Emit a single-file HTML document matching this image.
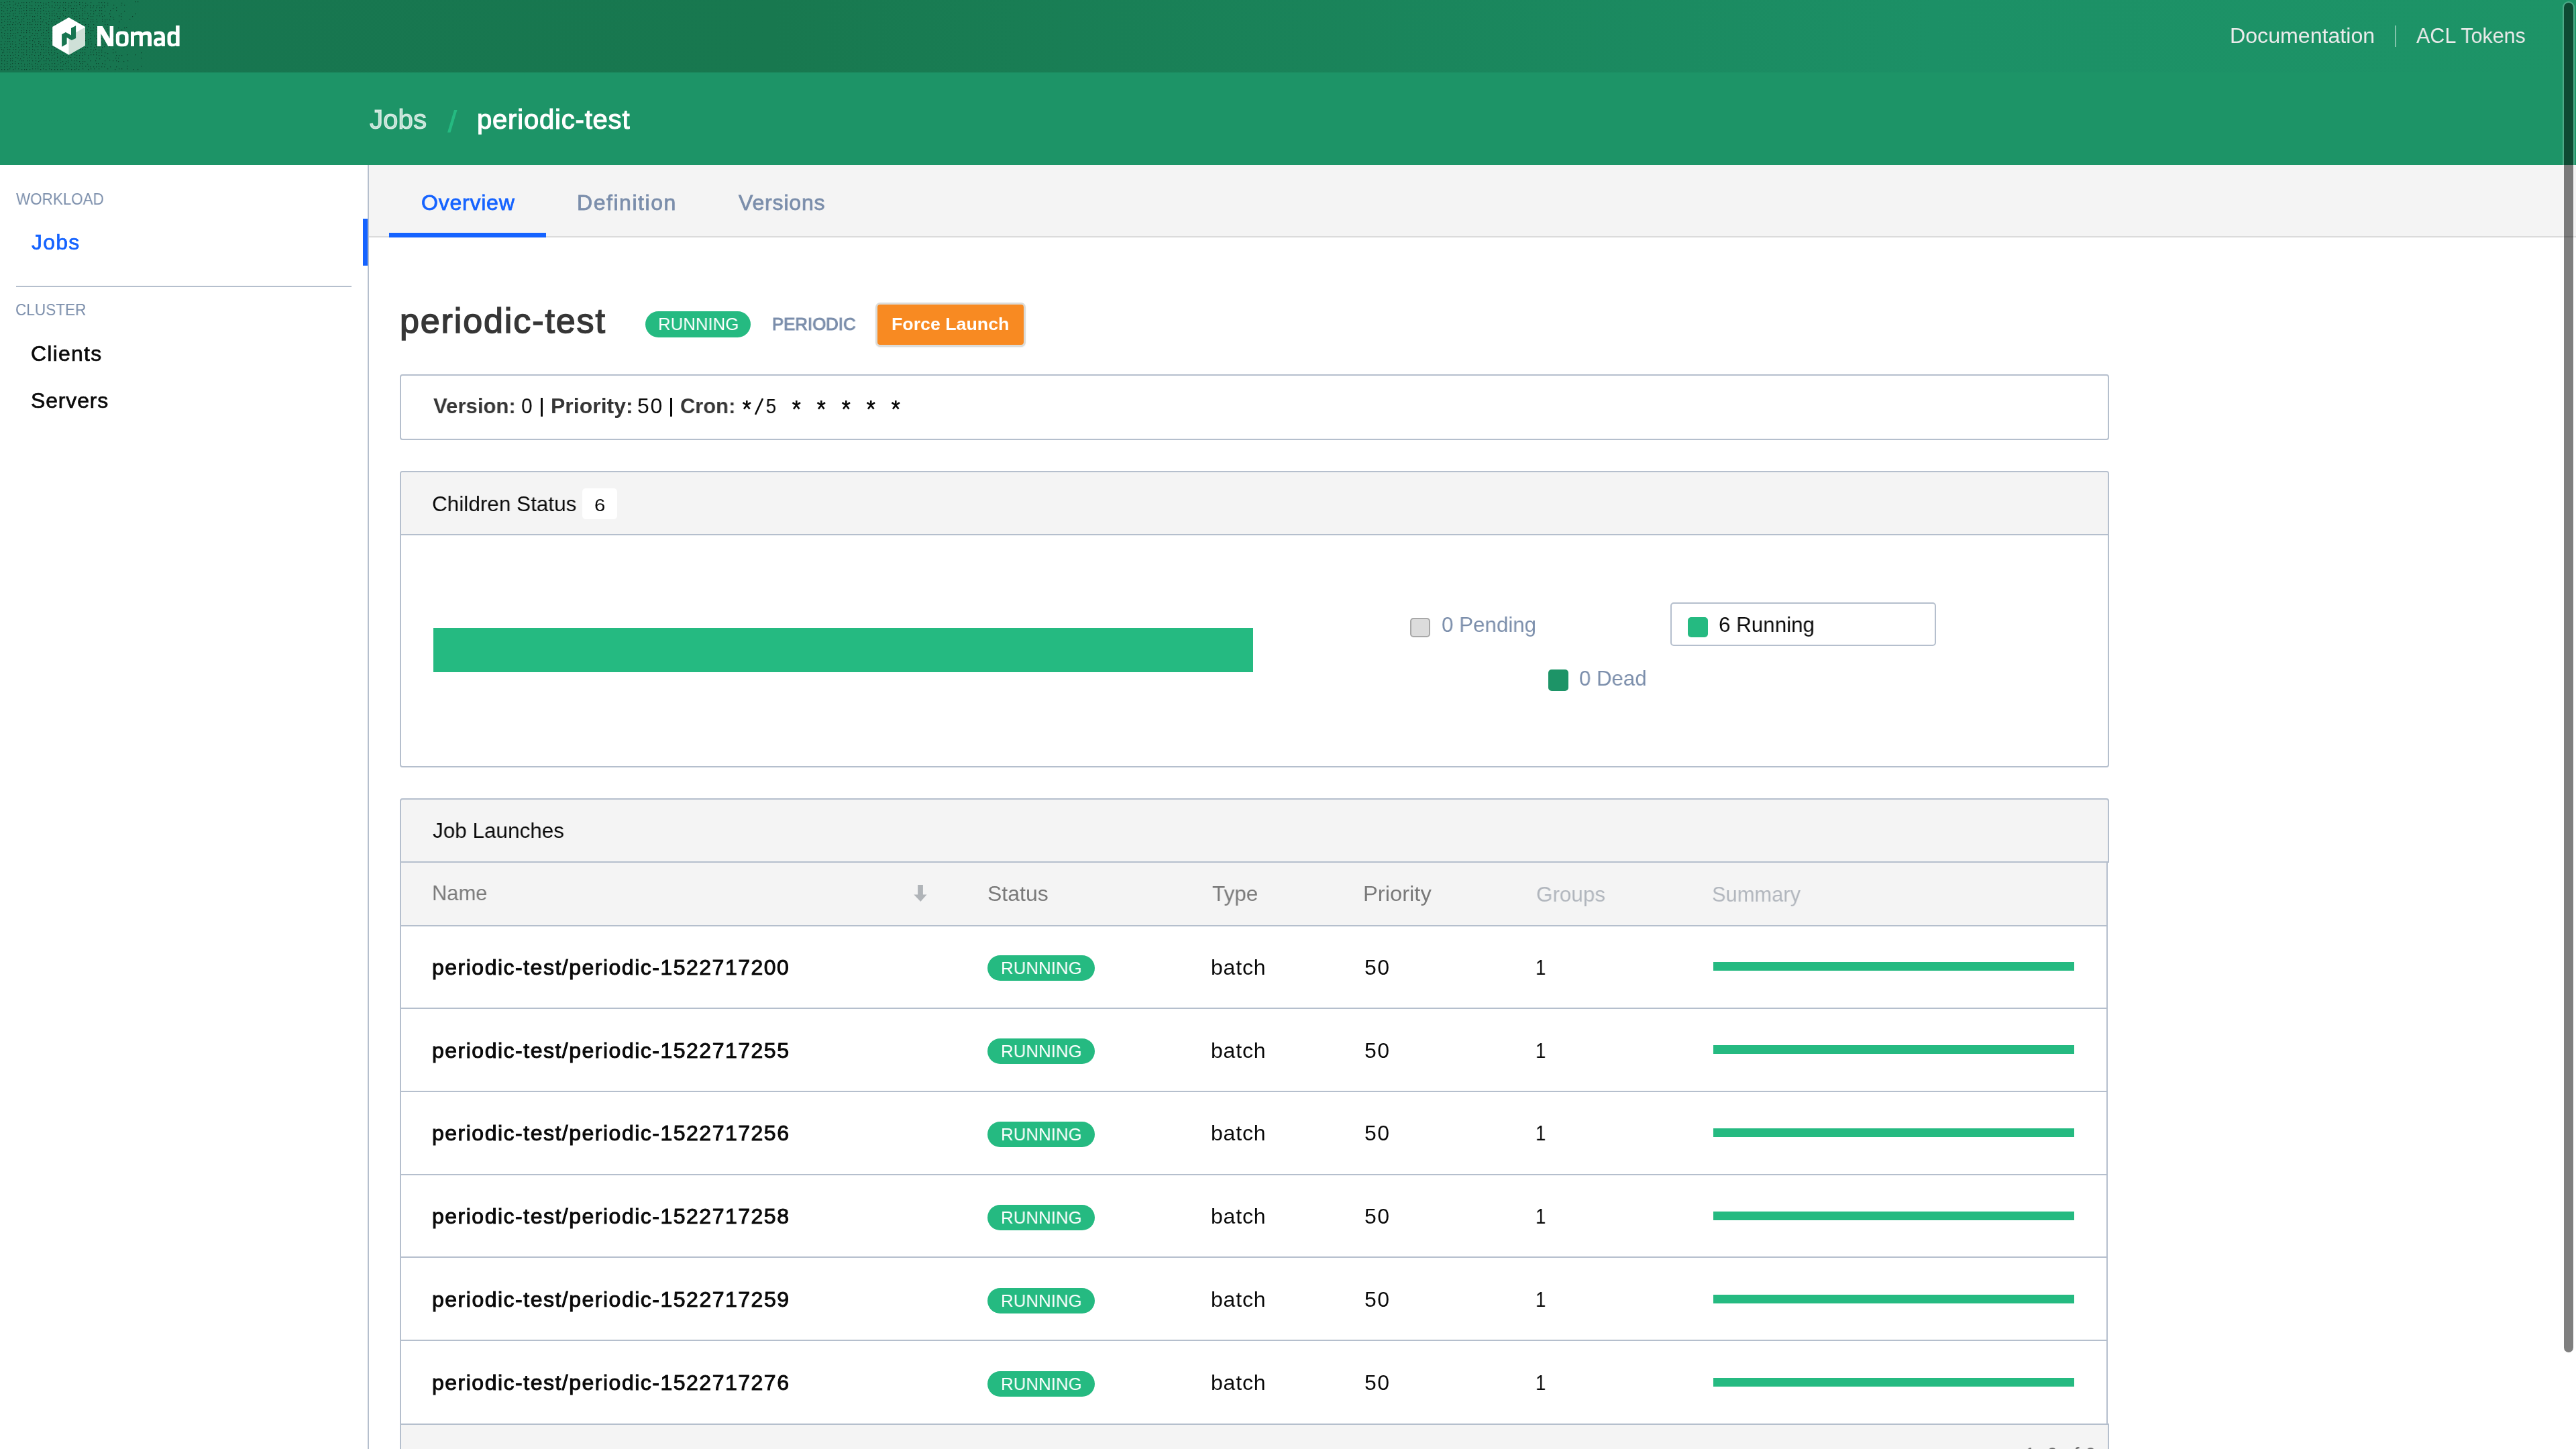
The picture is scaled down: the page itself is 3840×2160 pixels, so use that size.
<!DOCTYPE html>
<html><head><meta charset="utf-8"><title>periodic-test - Nomad</title>
<style>
html,body{margin:0;padding:0;}
body{width:3840px;height:2160px;overflow:hidden;position:relative;background:#fff;font-family:"Liberation Sans",sans-serif;}
body>div{position:absolute;}
@media (max-width:2400px){body{zoom:0.5;}}
.t{position:absolute;white-space:nowrap;line-height:1;transform-origin:0 0;will-change:transform;}
</style></head><body>
<div style="left:0px;top:0px;width:3840px;height:108px;background:linear-gradient(to right,#177550 0%,#18784f 30%,#1c9066 75%,#1d9467 100%);"></div>
<svg style="position:absolute;left:0;top:0" width="230" height="108"><path fill="#0c3b27" fill-opacity=".85" d="M1 3h1.2v1.2h-1.2zM6 3h1.2v1.2h-1.2zM10 2h1.2v1.2h-1.2zM14 2h1.2v1.2h-1.2zM19 2h1.2v1.2h-1.2zM23 4h1.2v1.2h-1.2zM27 4h1.2v1.2h-1.2zM32 3h1.2v1.2h-1.2zM35 3h1.2v1.2h-1.2zM39 3h1.2v1.2h-1.2zM43 3h1.2v1.2h-1.2zM47 2h1.2v1.2h-1.2zM52 3h1.2v1.2h-1.2zM56 3h1.2v1.2h-1.2zM60 3h1.2v1.2h-1.2zM64 4h1.2v1.2h-1.2zM68 4h1.2v1.2h-1.2zM72 3h1.2v1.2h-1.2zM77 2h1.2v1.2h-1.2zM81 3h1.2v1.2h-1.2zM85 3h1.2v1.2h-1.2zM89 3h1.2v1.2h-1.2zM94 3h1.2v1.2h-1.2zM97 3h1.2v1.2h-1.2zM102 4h1.2v1.2h-1.2zM106 3h1.2v1.2h-1.2zM110 2h1.2v1.2h-1.2zM113 3h1.2v1.2h-1.2zM118 3h1.2v1.2h-1.2zM122 3h1.2v1.2h-1.2zM127 4h1.2v1.2h-1.2zM135 3h1.2v1.2h-1.2zM147 3h1.2v1.2h-1.2zM151 3h1.2v1.2h-1.2zM155 3h1.2v1.2h-1.2zM160 4h1.2v1.2h-1.2zM181 4h1.2v1.2h-1.2zM201 2h1.2v1.2h-1.2zM205 2h1.2v1.2h-1.2zM1 6h1.2v1.2h-1.2zM5 8h1.2v1.2h-1.2zM10 7h1.2v1.2h-1.2zM14 6h1.2v1.2h-1.2zM19 7h1.2v1.2h-1.2zM22 6h1.2v1.2h-1.2zM26 8h1.2v1.2h-1.2zM30 8h1.2v1.2h-1.2zM35 7h1.2v1.2h-1.2zM39 8h1.2v1.2h-1.2zM44 7h1.2v1.2h-1.2zM47 8h1.2v1.2h-1.2zM52 7h1.2v1.2h-1.2zM57 8h1.2v1.2h-1.2zM61 8h1.2v1.2h-1.2zM64 7h1.2v1.2h-1.2zM68 6h1.2v1.2h-1.2zM72 7h1.2v1.2h-1.2zM77 8h1.2v1.2h-1.2zM82 7h1.2v1.2h-1.2zM85 7h1.2v1.2h-1.2zM89 8h1.2v1.2h-1.2zM93 7h1.2v1.2h-1.2zM97 7h1.2v1.2h-1.2zM102 8h1.2v1.2h-1.2zM105 8h1.2v1.2h-1.2zM110 8h1.2v1.2h-1.2zM114 8h1.2v1.2h-1.2zM118 6h1.2v1.2h-1.2zM123 8h1.2v1.2h-1.2zM127 8h1.2v1.2h-1.2zM130 7h1.2v1.2h-1.2zM134 8h1.2v1.2h-1.2zM139 8h1.2v1.2h-1.2zM144 8h1.2v1.2h-1.2zM147 7h1.2v1.2h-1.2zM152 7h1.2v1.2h-1.2zM155 8h1.2v1.2h-1.2zM160 7h1.2v1.2h-1.2zM169 7h1.2v1.2h-1.2zM180 7h1.2v1.2h-1.2zM185 7h1.2v1.2h-1.2zM2 11h1.2v1.2h-1.2zM7 11h1.2v1.2h-1.2zM11 12h1.2v1.2h-1.2zM15 11h1.2v1.2h-1.2zM19 11h1.2v1.2h-1.2zM23 12h1.2v1.2h-1.2zM28 12h1.2v1.2h-1.2zM31 12h1.2v1.2h-1.2zM35 11h1.2v1.2h-1.2zM39 11h1.2v1.2h-1.2zM44 12h1.2v1.2h-1.2zM47 12h1.2v1.2h-1.2zM51 12h1.2v1.2h-1.2zM55 12h1.2v1.2h-1.2zM60 12h1.2v1.2h-1.2zM64 11h1.2v1.2h-1.2zM68 11h1.2v1.2h-1.2zM73 10h1.2v1.2h-1.2zM77 10h1.2v1.2h-1.2zM81 11h1.2v1.2h-1.2zM86 12h1.2v1.2h-1.2zM88 11h1.2v1.2h-1.2zM94 11h1.2v1.2h-1.2zM97 12h1.2v1.2h-1.2zM101 11h1.2v1.2h-1.2zM106 12h1.2v1.2h-1.2zM109 12h1.2v1.2h-1.2zM113 12h1.2v1.2h-1.2zM119 11h1.2v1.2h-1.2zM122 12h1.2v1.2h-1.2zM126 11h1.2v1.2h-1.2zM134 11h1.2v1.2h-1.2zM138 11h1.2v1.2h-1.2zM143 11h1.2v1.2h-1.2zM148 11h1.2v1.2h-1.2zM151 11h1.2v1.2h-1.2zM155 10h1.2v1.2h-1.2zM168 12h1.2v1.2h-1.2zM173 11h1.2v1.2h-1.2zM2 15h1.2v1.2h-1.2zM5 16h1.2v1.2h-1.2zM10 15h1.2v1.2h-1.2zM15 16h1.2v1.2h-1.2zM18 15h1.2v1.2h-1.2zM22 15h1.2v1.2h-1.2zM28 16h1.2v1.2h-1.2zM31 16h1.2v1.2h-1.2zM35 15h1.2v1.2h-1.2zM39 15h1.2v1.2h-1.2zM44 15h1.2v1.2h-1.2zM47 15h1.2v1.2h-1.2zM51 15h1.2v1.2h-1.2zM56 16h1.2v1.2h-1.2zM60 16h1.2v1.2h-1.2zM64 15h1.2v1.2h-1.2zM68 16h1.2v1.2h-1.2zM72 16h1.2v1.2h-1.2zM77 16h1.2v1.2h-1.2zM80 15h1.2v1.2h-1.2zM86 16h1.2v1.2h-1.2zM89 16h1.2v1.2h-1.2zM94 15h1.2v1.2h-1.2zM97 15h1.2v1.2h-1.2zM102 16h1.2v1.2h-1.2zM106 16h1.2v1.2h-1.2zM109 16h1.2v1.2h-1.2zM114 16h1.2v1.2h-1.2zM117 16h1.2v1.2h-1.2zM122 15h1.2v1.2h-1.2zM126 16h1.2v1.2h-1.2zM135 15h1.2v1.2h-1.2zM139 16h1.2v1.2h-1.2zM142 15h1.2v1.2h-1.2zM148 15h1.2v1.2h-1.2zM151 15h1.2v1.2h-1.2zM156 16h1.2v1.2h-1.2zM164 15h1.2v1.2h-1.2zM173 15h1.2v1.2h-1.2zM185 16h1.2v1.2h-1.2zM2 20h1.2v1.2h-1.2zM7 20h1.2v1.2h-1.2zM11 19h1.2v1.2h-1.2zM14 19h1.2v1.2h-1.2zM19 20h1.2v1.2h-1.2zM22 19h1.2v1.2h-1.2zM28 19h1.2v1.2h-1.2zM32 19h1.2v1.2h-1.2zM36 20h1.2v1.2h-1.2zM39 19h1.2v1.2h-1.2zM44 19h1.2v1.2h-1.2zM47 19h1.2v1.2h-1.2zM52 19h1.2v1.2h-1.2zM55 19h1.2v1.2h-1.2zM60 19h1.2v1.2h-1.2zM65 20h1.2v1.2h-1.2zM69 20h1.2v1.2h-1.2zM73 19h1.2v1.2h-1.2zM77 20h1.2v1.2h-1.2zM80 19h1.2v1.2h-1.2zM84 20h1.2v1.2h-1.2zM89 20h1.2v1.2h-1.2zM93 20h1.2v1.2h-1.2zM98 19h1.2v1.2h-1.2zM101 19h1.2v1.2h-1.2zM106 19h1.2v1.2h-1.2zM111 20h1.2v1.2h-1.2zM113 19h1.2v1.2h-1.2zM117 19h1.2v1.2h-1.2zM122 20h1.2v1.2h-1.2zM126 19h1.2v1.2h-1.2zM130 19h1.2v1.2h-1.2zM134 20h1.2v1.2h-1.2zM139 20h1.2v1.2h-1.2zM147 19h1.2v1.2h-1.2zM151 20h1.2v1.2h-1.2zM163 20h1.2v1.2h-1.2zM180 20h1.2v1.2h-1.2zM201 20h1.2v1.2h-1.2zM2 24h1.2v1.2h-1.2zM5 24h1.2v1.2h-1.2zM11 24h1.2v1.2h-1.2zM14 23h1.2v1.2h-1.2zM19 23h1.2v1.2h-1.2zM23 24h1.2v1.2h-1.2zM26 24h1.2v1.2h-1.2zM31 24h1.2v1.2h-1.2zM35 24h1.2v1.2h-1.2zM39 23h1.2v1.2h-1.2zM44 23h1.2v1.2h-1.2zM48 24h1.2v1.2h-1.2zM51 24h1.2v1.2h-1.2zM55 23h1.2v1.2h-1.2zM60 24h1.2v1.2h-1.2zM65 24h1.2v1.2h-1.2zM68 25h1.2v1.2h-1.2zM73 23h1.2v1.2h-1.2zM77 23h1.2v1.2h-1.2zM81 23h1.2v1.2h-1.2zM85 24h1.2v1.2h-1.2zM89 24h1.2v1.2h-1.2zM94 23h1.2v1.2h-1.2zM97 24h1.2v1.2h-1.2zM102 24h1.2v1.2h-1.2zM107 23h1.2v1.2h-1.2zM111 24h1.2v1.2h-1.2zM114 24h1.2v1.2h-1.2zM118 23h1.2v1.2h-1.2zM122 23h1.2v1.2h-1.2zM131 23h1.2v1.2h-1.2zM135 24h1.2v1.2h-1.2zM138 24h1.2v1.2h-1.2zM144 23h1.2v1.2h-1.2zM148 23h1.2v1.2h-1.2zM152 24h1.2v1.2h-1.2zM155 23h1.2v1.2h-1.2zM164 24h1.2v1.2h-1.2zM168 25h1.2v1.2h-1.2zM177 23h1.2v1.2h-1.2zM180 24h1.2v1.2h-1.2zM197 24h1.2v1.2h-1.2zM2 29h1.2v1.2h-1.2zM7 28h1.2v1.2h-1.2zM11 28h1.2v1.2h-1.2zM14 28h1.2v1.2h-1.2zM18 27h1.2v1.2h-1.2zM22 27h1.2v1.2h-1.2zM27 28h1.2v1.2h-1.2zM32 29h1.2v1.2h-1.2zM34 27h1.2v1.2h-1.2zM40 28h1.2v1.2h-1.2zM43 28h1.2v1.2h-1.2zM48 29h1.2v1.2h-1.2zM51 29h1.2v1.2h-1.2zM56 28h1.2v1.2h-1.2zM60 27h1.2v1.2h-1.2zM64 29h1.2v1.2h-1.2zM68 28h1.2v1.2h-1.2zM73 27h1.2v1.2h-1.2zM77 29h1.2v1.2h-1.2zM81 28h1.2v1.2h-1.2zM86 27h1.2v1.2h-1.2zM88 27h1.2v1.2h-1.2zM93 29h1.2v1.2h-1.2zM98 28h1.2v1.2h-1.2zM102 29h1.2v1.2h-1.2zM106 28h1.2v1.2h-1.2zM110 27h1.2v1.2h-1.2zM114 28h1.2v1.2h-1.2zM118 27h1.2v1.2h-1.2zM123 27h1.2v1.2h-1.2zM126 28h1.2v1.2h-1.2zM130 27h1.2v1.2h-1.2zM135 28h1.2v1.2h-1.2zM138 28h1.2v1.2h-1.2zM143 28h1.2v1.2h-1.2zM152 28h1.2v1.2h-1.2zM156 29h1.2v1.2h-1.2zM159 28h1.2v1.2h-1.2zM163 29h1.2v1.2h-1.2zM169 28h1.2v1.2h-1.2zM180 28h1.2v1.2h-1.2zM193 28h1.2v1.2h-1.2zM2 33h1.2v1.2h-1.2zM6 31h1.2v1.2h-1.2zM11 32h1.2v1.2h-1.2zM15 32h1.2v1.2h-1.2zM19 33h1.2v1.2h-1.2zM23 32h1.2v1.2h-1.2zM28 33h1.2v1.2h-1.2zM31 32h1.2v1.2h-1.2zM35 31h1.2v1.2h-1.2zM40 33h1.2v1.2h-1.2zM44 33h1.2v1.2h-1.2zM48 31h1.2v1.2h-1.2zM52 32h1.2v1.2h-1.2zM56 32h1.2v1.2h-1.2zM60 32h1.2v1.2h-1.2zM63 32h1.2v1.2h-1.2zM68 33h1.2v1.2h-1.2zM72 31h1.2v1.2h-1.2zM76 31h1.2v1.2h-1.2zM80 32h1.2v1.2h-1.2zM84 32h1.2v1.2h-1.2zM90 33h1.2v1.2h-1.2zM92 32h1.2v1.2h-1.2zM98 31h1.2v1.2h-1.2zM102 32h1.2v1.2h-1.2zM105 33h1.2v1.2h-1.2zM111 33h1.2v1.2h-1.2zM115 33h1.2v1.2h-1.2zM118 33h1.2v1.2h-1.2zM123 32h1.2v1.2h-1.2zM126 32h1.2v1.2h-1.2zM134 32h1.2v1.2h-1.2zM138 31h1.2v1.2h-1.2zM144 32h1.2v1.2h-1.2zM152 31h1.2v1.2h-1.2zM156 32h1.2v1.2h-1.2zM177 32h1.2v1.2h-1.2zM1 37h1.2v1.2h-1.2zM6 37h1.2v1.2h-1.2zM11 36h1.2v1.2h-1.2zM14 36h1.2v1.2h-1.2zM18 36h1.2v1.2h-1.2zM22 36h1.2v1.2h-1.2zM26 35h1.2v1.2h-1.2zM30 36h1.2v1.2h-1.2zM35 36h1.2v1.2h-1.2zM40 36h1.2v1.2h-1.2zM44 36h1.2v1.2h-1.2zM47 36h1.2v1.2h-1.2zM52 36h1.2v1.2h-1.2zM55 36h1.2v1.2h-1.2zM60 36h1.2v1.2h-1.2zM65 37h1.2v1.2h-1.2zM69 35h1.2v1.2h-1.2zM72 36h1.2v1.2h-1.2zM77 35h1.2v1.2h-1.2zM82 36h1.2v1.2h-1.2zM85 36h1.2v1.2h-1.2zM90 36h1.2v1.2h-1.2zM93 35h1.2v1.2h-1.2zM98 37h1.2v1.2h-1.2zM102 37h1.2v1.2h-1.2zM106 36h1.2v1.2h-1.2zM109 36h1.2v1.2h-1.2zM114 37h1.2v1.2h-1.2zM119 37h1.2v1.2h-1.2zM122 36h1.2v1.2h-1.2zM127 36h1.2v1.2h-1.2zM131 36h1.2v1.2h-1.2zM139 36h1.2v1.2h-1.2zM156 36h1.2v1.2h-1.2zM160 36h1.2v1.2h-1.2zM3 40h1.2v1.2h-1.2zM5 41h1.2v1.2h-1.2zM10 40h1.2v1.2h-1.2zM15 41h1.2v1.2h-1.2zM19 40h1.2v1.2h-1.2zM23 41h1.2v1.2h-1.2zM28 40h1.2v1.2h-1.2zM32 41h1.2v1.2h-1.2zM35 40h1.2v1.2h-1.2zM40 41h1.2v1.2h-1.2zM44 41h1.2v1.2h-1.2zM47 40h1.2v1.2h-1.2zM51 40h1.2v1.2h-1.2zM55 40h1.2v1.2h-1.2zM60 40h1.2v1.2h-1.2zM65 40h1.2v1.2h-1.2zM69 40h1.2v1.2h-1.2zM72 41h1.2v1.2h-1.2zM77 40h1.2v1.2h-1.2zM82 40h1.2v1.2h-1.2zM84 39h1.2v1.2h-1.2zM90 41h1.2v1.2h-1.2zM93 40h1.2v1.2h-1.2zM97 40h1.2v1.2h-1.2zM102 40h1.2v1.2h-1.2zM105 40h1.2v1.2h-1.2zM110 40h1.2v1.2h-1.2zM113 41h1.2v1.2h-1.2zM119 41h1.2v1.2h-1.2zM122 40h1.2v1.2h-1.2zM131 39h1.2v1.2h-1.2zM134 41h1.2v1.2h-1.2zM139 41h1.2v1.2h-1.2zM143 40h1.2v1.2h-1.2zM159 40h1.2v1.2h-1.2zM176 41h1.2v1.2h-1.2zM185 41h1.2v1.2h-1.2zM188 40h1.2v1.2h-1.2zM1 44h1.2v1.2h-1.2zM7 45h1.2v1.2h-1.2zM11 44h1.2v1.2h-1.2zM15 45h1.2v1.2h-1.2zM18 44h1.2v1.2h-1.2zM22 44h1.2v1.2h-1.2zM26 44h1.2v1.2h-1.2zM31 45h1.2v1.2h-1.2zM35 44h1.2v1.2h-1.2zM39 45h1.2v1.2h-1.2zM43 45h1.2v1.2h-1.2zM48 44h1.2v1.2h-1.2zM52 45h1.2v1.2h-1.2zM57 45h1.2v1.2h-1.2zM60 44h1.2v1.2h-1.2zM64 44h1.2v1.2h-1.2zM69 45h1.2v1.2h-1.2zM72 44h1.2v1.2h-1.2zM77 45h1.2v1.2h-1.2zM80 45h1.2v1.2h-1.2zM85 44h1.2v1.2h-1.2zM88 45h1.2v1.2h-1.2zM94 45h1.2v1.2h-1.2zM97 45h1.2v1.2h-1.2zM102 45h1.2v1.2h-1.2zM106 45h1.2v1.2h-1.2zM111 44h1.2v1.2h-1.2zM114 45h1.2v1.2h-1.2zM119 44h1.2v1.2h-1.2zM122 44h1.2v1.2h-1.2zM126 44h1.2v1.2h-1.2zM130 44h1.2v1.2h-1.2zM135 45h1.2v1.2h-1.2zM138 45h1.2v1.2h-1.2zM143 44h1.2v1.2h-1.2zM160 44h1.2v1.2h-1.2zM168 45h1.2v1.2h-1.2zM181 44h1.2v1.2h-1.2zM2 48h1.2v1.2h-1.2zM6 49h1.2v1.2h-1.2zM11 49h1.2v1.2h-1.2zM15 49h1.2v1.2h-1.2zM19 49h1.2v1.2h-1.2zM22 49h1.2v1.2h-1.2zM26 48h1.2v1.2h-1.2zM31 48h1.2v1.2h-1.2zM35 48h1.2v1.2h-1.2zM39 48h1.2v1.2h-1.2zM44 48h1.2v1.2h-1.2zM48 49h1.2v1.2h-1.2zM53 49h1.2v1.2h-1.2zM55 49h1.2v1.2h-1.2zM61 49h1.2v1.2h-1.2zM64 48h1.2v1.2h-1.2zM68 49h1.2v1.2h-1.2zM72 48h1.2v1.2h-1.2zM77 49h1.2v1.2h-1.2zM80 49h1.2v1.2h-1.2zM85 49h1.2v1.2h-1.2zM89 49h1.2v1.2h-1.2zM93 49h1.2v1.2h-1.2zM97 49h1.2v1.2h-1.2zM102 48h1.2v1.2h-1.2zM106 49h1.2v1.2h-1.2zM109 49h1.2v1.2h-1.2zM114 49h1.2v1.2h-1.2zM118 49h1.2v1.2h-1.2zM122 49h1.2v1.2h-1.2zM127 49h1.2v1.2h-1.2zM131 48h1.2v1.2h-1.2zM134 49h1.2v1.2h-1.2zM144 48h1.2v1.2h-1.2zM147 49h1.2v1.2h-1.2zM160 49h1.2v1.2h-1.2zM168 48h1.2v1.2h-1.2zM173 49h1.2v1.2h-1.2zM2 53h1.2v1.2h-1.2zM6 52h1.2v1.2h-1.2zM11 53h1.2v1.2h-1.2zM15 53h1.2v1.2h-1.2zM18 52h1.2v1.2h-1.2zM22 53h1.2v1.2h-1.2zM28 52h1.2v1.2h-1.2zM30 52h1.2v1.2h-1.2zM35 54h1.2v1.2h-1.2zM38 53h1.2v1.2h-1.2zM44 54h1.2v1.2h-1.2zM47 52h1.2v1.2h-1.2zM51 52h1.2v1.2h-1.2zM55 53h1.2v1.2h-1.2zM61 52h1.2v1.2h-1.2zM64 52h1.2v1.2h-1.2zM68 53h1.2v1.2h-1.2zM72 53h1.2v1.2h-1.2zM77 53h1.2v1.2h-1.2zM81 53h1.2v1.2h-1.2zM86 52h1.2v1.2h-1.2zM90 52h1.2v1.2h-1.2zM94 53h1.2v1.2h-1.2zM97 53h1.2v1.2h-1.2zM102 53h1.2v1.2h-1.2zM106 53h1.2v1.2h-1.2zM110 52h1.2v1.2h-1.2zM114 53h1.2v1.2h-1.2zM118 53h1.2v1.2h-1.2zM123 53h1.2v1.2h-1.2zM126 52h1.2v1.2h-1.2zM135 52h1.2v1.2h-1.2zM140 53h1.2v1.2h-1.2zM143 53h1.2v1.2h-1.2zM152 53h1.2v1.2h-1.2zM163 52h1.2v1.2h-1.2zM168 53h1.2v1.2h-1.2zM177 53h1.2v1.2h-1.2zM3 56h1.2v1.2h-1.2zM7 56h1.2v1.2h-1.2zM11 57h1.2v1.2h-1.2zM14 57h1.2v1.2h-1.2zM19 56h1.2v1.2h-1.2zM23 56h1.2v1.2h-1.2zM28 58h1.2v1.2h-1.2zM31 57h1.2v1.2h-1.2zM35 56h1.2v1.2h-1.2zM39 57h1.2v1.2h-1.2zM44 56h1.2v1.2h-1.2zM49 57h1.2v1.2h-1.2zM52 57h1.2v1.2h-1.2zM56 57h1.2v1.2h-1.2zM59 56h1.2v1.2h-1.2zM65 57h1.2v1.2h-1.2zM68 57h1.2v1.2h-1.2zM73 57h1.2v1.2h-1.2zM78 57h1.2v1.2h-1.2zM80 56h1.2v1.2h-1.2zM84 57h1.2v1.2h-1.2zM89 58h1.2v1.2h-1.2zM93 57h1.2v1.2h-1.2zM97 58h1.2v1.2h-1.2zM102 57h1.2v1.2h-1.2zM106 57h1.2v1.2h-1.2zM109 58h1.2v1.2h-1.2zM117 57h1.2v1.2h-1.2zM123 58h1.2v1.2h-1.2zM126 57h1.2v1.2h-1.2zM131 58h1.2v1.2h-1.2zM134 57h1.2v1.2h-1.2zM143 57h1.2v1.2h-1.2zM151 57h1.2v1.2h-1.2zM156 56h1.2v1.2h-1.2zM159 57h1.2v1.2h-1.2zM164 56h1.2v1.2h-1.2zM169 56h1.2v1.2h-1.2zM185 56h1.2v1.2h-1.2zM1 61h1.2v1.2h-1.2zM7 61h1.2v1.2h-1.2zM11 61h1.2v1.2h-1.2zM14 61h1.2v1.2h-1.2zM18 61h1.2v1.2h-1.2zM22 62h1.2v1.2h-1.2zM28 60h1.2v1.2h-1.2zM31 61h1.2v1.2h-1.2zM35 61h1.2v1.2h-1.2zM39 62h1.2v1.2h-1.2zM44 60h1.2v1.2h-1.2zM48 60h1.2v1.2h-1.2zM51 62h1.2v1.2h-1.2zM57 61h1.2v1.2h-1.2zM59 62h1.2v1.2h-1.2zM64 61h1.2v1.2h-1.2zM68 61h1.2v1.2h-1.2zM72 62h1.2v1.2h-1.2zM76 60h1.2v1.2h-1.2zM81 61h1.2v1.2h-1.2zM84 61h1.2v1.2h-1.2zM90 61h1.2v1.2h-1.2zM93 62h1.2v1.2h-1.2zM98 60h1.2v1.2h-1.2zM101 62h1.2v1.2h-1.2zM106 60h1.2v1.2h-1.2zM110 62h1.2v1.2h-1.2zM113 62h1.2v1.2h-1.2zM118 61h1.2v1.2h-1.2zM121 61h1.2v1.2h-1.2zM127 60h1.2v1.2h-1.2zM131 62h1.2v1.2h-1.2zM135 61h1.2v1.2h-1.2zM144 62h1.2v1.2h-1.2zM147 61h1.2v1.2h-1.2zM151 62h1.2v1.2h-1.2zM155 60h1.2v1.2h-1.2zM160 60h1.2v1.2h-1.2zM164 61h1.2v1.2h-1.2zM168 61h1.2v1.2h-1.2zM181 61h1.2v1.2h-1.2zM184 61h1.2v1.2h-1.2zM197 60h1.2v1.2h-1.2zM1 66h1.2v1.2h-1.2zM6 65h1.2v1.2h-1.2zM10 65h1.2v1.2h-1.2zM15 65h1.2v1.2h-1.2zM18 65h1.2v1.2h-1.2zM23 66h1.2v1.2h-1.2zM28 64h1.2v1.2h-1.2zM32 66h1.2v1.2h-1.2zM35 65h1.2v1.2h-1.2zM39 64h1.2v1.2h-1.2zM44 64h1.2v1.2h-1.2zM48 66h1.2v1.2h-1.2zM52 66h1.2v1.2h-1.2zM57 64h1.2v1.2h-1.2zM60 66h1.2v1.2h-1.2zM64 66h1.2v1.2h-1.2zM68 65h1.2v1.2h-1.2zM73 65h1.2v1.2h-1.2zM77 65h1.2v1.2h-1.2zM82 65h1.2v1.2h-1.2zM85 65h1.2v1.2h-1.2zM88 65h1.2v1.2h-1.2zM93 65h1.2v1.2h-1.2zM97 65h1.2v1.2h-1.2zM102 65h1.2v1.2h-1.2zM105 66h1.2v1.2h-1.2zM110 65h1.2v1.2h-1.2zM114 65h1.2v1.2h-1.2zM118 65h1.2v1.2h-1.2zM121 65h1.2v1.2h-1.2zM131 65h1.2v1.2h-1.2zM136 65h1.2v1.2h-1.2zM142 66h1.2v1.2h-1.2zM146 65h1.2v1.2h-1.2zM152 65h1.2v1.2h-1.2zM156 66h1.2v1.2h-1.2zM159 65h1.2v1.2h-1.2zM1 70h1.2v1.2h-1.2zM6 70h1.2v1.2h-1.2zM10 70h1.2v1.2h-1.2zM15 69h1.2v1.2h-1.2zM19 70h1.2v1.2h-1.2zM23 69h1.2v1.2h-1.2zM27 70h1.2v1.2h-1.2zM31 69h1.2v1.2h-1.2zM35 69h1.2v1.2h-1.2zM39 69h1.2v1.2h-1.2zM43 70h1.2v1.2h-1.2zM48 69h1.2v1.2h-1.2zM53 69h1.2v1.2h-1.2zM56 69h1.2v1.2h-1.2zM61 69h1.2v1.2h-1.2zM64 69h1.2v1.2h-1.2zM68 69h1.2v1.2h-1.2zM72 70h1.2v1.2h-1.2zM77 69h1.2v1.2h-1.2zM81 70h1.2v1.2h-1.2zM86 70h1.2v1.2h-1.2zM89 70h1.2v1.2h-1.2zM93 69h1.2v1.2h-1.2zM97 69h1.2v1.2h-1.2zM102 69h1.2v1.2h-1.2zM106 70h1.2v1.2h-1.2zM111 70h1.2v1.2h-1.2zM113 69h1.2v1.2h-1.2zM118 69h1.2v1.2h-1.2zM123 70h1.2v1.2h-1.2zM127 70h1.2v1.2h-1.2zM130 70h1.2v1.2h-1.2zM135 69h1.2v1.2h-1.2zM140 70h1.2v1.2h-1.2zM143 69h1.2v1.2h-1.2zM147 70h1.2v1.2h-1.2zM152 70h1.2v1.2h-1.2zM155 69h1.2v1.2h-1.2zM163 69h1.2v1.2h-1.2zM184 70h1.2v1.2h-1.2zM2 73h1.2v1.2h-1.2zM5 74h1.2v1.2h-1.2zM11 73h1.2v1.2h-1.2zM14 73h1.2v1.2h-1.2zM19 73h1.2v1.2h-1.2zM23 73h1.2v1.2h-1.2zM28 74h1.2v1.2h-1.2zM31 73h1.2v1.2h-1.2zM35 73h1.2v1.2h-1.2zM39 74h1.2v1.2h-1.2zM43 73h1.2v1.2h-1.2zM48 73h1.2v1.2h-1.2zM51 74h1.2v1.2h-1.2zM56 73h1.2v1.2h-1.2zM61 73h1.2v1.2h-1.2zM64 73h1.2v1.2h-1.2zM68 74h1.2v1.2h-1.2zM72 74h1.2v1.2h-1.2zM76 74h1.2v1.2h-1.2zM81 74h1.2v1.2h-1.2zM84 73h1.2v1.2h-1.2zM89 74h1.2v1.2h-1.2zM94 74h1.2v1.2h-1.2zM97 73h1.2v1.2h-1.2zM101 74h1.2v1.2h-1.2zM106 73h1.2v1.2h-1.2zM109 74h1.2v1.2h-1.2zM114 74h1.2v1.2h-1.2zM119 73h1.2v1.2h-1.2zM122 73h1.2v1.2h-1.2zM126 73h1.2v1.2h-1.2zM135 73h1.2v1.2h-1.2zM139 74h1.2v1.2h-1.2zM142 73h1.2v1.2h-1.2zM147 74h1.2v1.2h-1.2zM151 74h1.2v1.2h-1.2zM168 73h1.2v1.2h-1.2zM3 78h1.2v1.2h-1.2zM5 77h1.2v1.2h-1.2zM10 77h1.2v1.2h-1.2zM14 77h1.2v1.2h-1.2zM18 78h1.2v1.2h-1.2zM23 77h1.2v1.2h-1.2zM27 77h1.2v1.2h-1.2zM32 78h1.2v1.2h-1.2zM34 78h1.2v1.2h-1.2zM39 77h1.2v1.2h-1.2zM44 77h1.2v1.2h-1.2zM48 77h1.2v1.2h-1.2zM52 78h1.2v1.2h-1.2zM56 77h1.2v1.2h-1.2zM60 78h1.2v1.2h-1.2zM65 78h1.2v1.2h-1.2zM68 77h1.2v1.2h-1.2zM72 78h1.2v1.2h-1.2zM76 78h1.2v1.2h-1.2zM81 78h1.2v1.2h-1.2zM85 79h1.2v1.2h-1.2zM89 77h1.2v1.2h-1.2zM93 78h1.2v1.2h-1.2zM97 77h1.2v1.2h-1.2zM102 77h1.2v1.2h-1.2zM106 78h1.2v1.2h-1.2zM110 77h1.2v1.2h-1.2zM113 78h1.2v1.2h-1.2zM119 78h1.2v1.2h-1.2zM122 78h1.2v1.2h-1.2zM126 78h1.2v1.2h-1.2zM134 77h1.2v1.2h-1.2zM138 77h1.2v1.2h-1.2zM143 78h1.2v1.2h-1.2zM147 78h1.2v1.2h-1.2zM151 77h1.2v1.2h-1.2zM156 78h1.2v1.2h-1.2zM160 79h1.2v1.2h-1.2zM168 78h1.2v1.2h-1.2zM172 77h1.2v1.2h-1.2zM210 78h1.2v1.2h-1.2zM2 82h1.2v1.2h-1.2zM6 82h1.2v1.2h-1.2zM11 82h1.2v1.2h-1.2zM15 82h1.2v1.2h-1.2zM19 82h1.2v1.2h-1.2zM22 81h1.2v1.2h-1.2zM27 82h1.2v1.2h-1.2zM32 83h1.2v1.2h-1.2zM35 81h1.2v1.2h-1.2zM39 81h1.2v1.2h-1.2zM43 82h1.2v1.2h-1.2zM47 81h1.2v1.2h-1.2zM51 82h1.2v1.2h-1.2zM57 82h1.2v1.2h-1.2zM60 81h1.2v1.2h-1.2zM64 82h1.2v1.2h-1.2zM68 82h1.2v1.2h-1.2zM73 81h1.2v1.2h-1.2zM77 82h1.2v1.2h-1.2zM80 81h1.2v1.2h-1.2zM85 83h1.2v1.2h-1.2zM90 83h1.2v1.2h-1.2zM94 82h1.2v1.2h-1.2zM98 82h1.2v1.2h-1.2zM102 83h1.2v1.2h-1.2zM106 81h1.2v1.2h-1.2zM111 81h1.2v1.2h-1.2zM114 82h1.2v1.2h-1.2zM118 82h1.2v1.2h-1.2zM122 82h1.2v1.2h-1.2zM126 81h1.2v1.2h-1.2zM131 82h1.2v1.2h-1.2zM135 81h1.2v1.2h-1.2zM139 81h1.2v1.2h-1.2zM143 81h1.2v1.2h-1.2zM147 82h1.2v1.2h-1.2zM151 82h1.2v1.2h-1.2zM155 83h1.2v1.2h-1.2zM173 82h1.2v1.2h-1.2zM177 82h1.2v1.2h-1.2zM181 82h1.2v1.2h-1.2zM189 81h1.2v1.2h-1.2zM201 81h1.2v1.2h-1.2zM2 87h1.2v1.2h-1.2zM7 87h1.2v1.2h-1.2zM11 86h1.2v1.2h-1.2zM15 87h1.2v1.2h-1.2zM18 86h1.2v1.2h-1.2zM23 85h1.2v1.2h-1.2zM26 86h1.2v1.2h-1.2zM30 87h1.2v1.2h-1.2zM35 85h1.2v1.2h-1.2zM40 86h1.2v1.2h-1.2zM43 85h1.2v1.2h-1.2zM47 86h1.2v1.2h-1.2zM52 86h1.2v1.2h-1.2zM57 86h1.2v1.2h-1.2zM61 87h1.2v1.2h-1.2zM64 85h1.2v1.2h-1.2zM69 87h1.2v1.2h-1.2zM72 87h1.2v1.2h-1.2zM77 86h1.2v1.2h-1.2zM81 86h1.2v1.2h-1.2zM85 85h1.2v1.2h-1.2zM89 87h1.2v1.2h-1.2zM92 85h1.2v1.2h-1.2zM97 86h1.2v1.2h-1.2zM101 85h1.2v1.2h-1.2zM105 85h1.2v1.2h-1.2zM111 85h1.2v1.2h-1.2zM114 86h1.2v1.2h-1.2zM118 86h1.2v1.2h-1.2zM122 87h1.2v1.2h-1.2zM131 86h1.2v1.2h-1.2zM143 86h1.2v1.2h-1.2zM148 87h1.2v1.2h-1.2zM160 86h1.2v1.2h-1.2zM172 86h1.2v1.2h-1.2zM176 86h1.2v1.2h-1.2zM210 86h1.2v1.2h-1.2zM2 90h1.2v1.2h-1.2zM6 90h1.2v1.2h-1.2zM10 91h1.2v1.2h-1.2zM15 90h1.2v1.2h-1.2zM18 90h1.2v1.2h-1.2zM22 91h1.2v1.2h-1.2zM28 89h1.2v1.2h-1.2zM32 90h1.2v1.2h-1.2zM34 90h1.2v1.2h-1.2zM40 90h1.2v1.2h-1.2zM43 90h1.2v1.2h-1.2zM48 90h1.2v1.2h-1.2zM53 90h1.2v1.2h-1.2zM57 91h1.2v1.2h-1.2zM59 90h1.2v1.2h-1.2zM65 90h1.2v1.2h-1.2zM68 90h1.2v1.2h-1.2zM73 90h1.2v1.2h-1.2zM76 89h1.2v1.2h-1.2zM80 90h1.2v1.2h-1.2zM85 90h1.2v1.2h-1.2zM89 89h1.2v1.2h-1.2zM93 91h1.2v1.2h-1.2zM98 91h1.2v1.2h-1.2zM101 90h1.2v1.2h-1.2zM106 89h1.2v1.2h-1.2zM110 90h1.2v1.2h-1.2zM114 90h1.2v1.2h-1.2zM118 91h1.2v1.2h-1.2zM123 91h1.2v1.2h-1.2zM126 91h1.2v1.2h-1.2zM134 90h1.2v1.2h-1.2zM142 90h1.2v1.2h-1.2zM156 90h1.2v1.2h-1.2zM163 89h1.2v1.2h-1.2zM168 90h1.2v1.2h-1.2zM173 90h1.2v1.2h-1.2zM176 91h1.2v1.2h-1.2zM184 91h1.2v1.2h-1.2zM190 90h1.2v1.2h-1.2zM2 94h1.2v1.2h-1.2zM6 95h1.2v1.2h-1.2zM10 94h1.2v1.2h-1.2zM15 95h1.2v1.2h-1.2zM18 94h1.2v1.2h-1.2zM22 94h1.2v1.2h-1.2zM27 94h1.2v1.2h-1.2zM31 94h1.2v1.2h-1.2zM36 95h1.2v1.2h-1.2zM40 95h1.2v1.2h-1.2zM43 94h1.2v1.2h-1.2zM47 95h1.2v1.2h-1.2zM52 94h1.2v1.2h-1.2zM55 95h1.2v1.2h-1.2zM61 95h1.2v1.2h-1.2zM65 95h1.2v1.2h-1.2zM68 94h1.2v1.2h-1.2zM72 95h1.2v1.2h-1.2zM77 94h1.2v1.2h-1.2zM81 94h1.2v1.2h-1.2zM86 95h1.2v1.2h-1.2zM90 93h1.2v1.2h-1.2zM94 95h1.2v1.2h-1.2zM97 94h1.2v1.2h-1.2zM101 93h1.2v1.2h-1.2zM105 95h1.2v1.2h-1.2zM110 94h1.2v1.2h-1.2zM113 95h1.2v1.2h-1.2zM119 94h1.2v1.2h-1.2zM122 94h1.2v1.2h-1.2zM130 95h1.2v1.2h-1.2zM143 94h1.2v1.2h-1.2zM146 94h1.2v1.2h-1.2zM152 94h1.2v1.2h-1.2zM156 95h1.2v1.2h-1.2zM1 99h1.2v1.2h-1.2zM6 99h1.2v1.2h-1.2zM10 98h1.2v1.2h-1.2zM15 99h1.2v1.2h-1.2zM18 99h1.2v1.2h-1.2zM23 99h1.2v1.2h-1.2zM28 98h1.2v1.2h-1.2zM32 98h1.2v1.2h-1.2zM36 98h1.2v1.2h-1.2zM40 98h1.2v1.2h-1.2zM43 98h1.2v1.2h-1.2zM48 98h1.2v1.2h-1.2zM52 98h1.2v1.2h-1.2zM56 99h1.2v1.2h-1.2zM60 98h1.2v1.2h-1.2zM64 98h1.2v1.2h-1.2zM68 98h1.2v1.2h-1.2zM73 98h1.2v1.2h-1.2zM77 98h1.2v1.2h-1.2zM81 99h1.2v1.2h-1.2zM84 98h1.2v1.2h-1.2zM90 98h1.2v1.2h-1.2zM93 98h1.2v1.2h-1.2zM98 98h1.2v1.2h-1.2zM101 98h1.2v1.2h-1.2zM106 98h1.2v1.2h-1.2zM110 99h1.2v1.2h-1.2zM114 98h1.2v1.2h-1.2zM118 98h1.2v1.2h-1.2zM122 98h1.2v1.2h-1.2zM127 98h1.2v1.2h-1.2zM131 98h1.2v1.2h-1.2zM134 99h1.2v1.2h-1.2zM139 99h1.2v1.2h-1.2zM143 99h1.2v1.2h-1.2zM147 98h1.2v1.2h-1.2zM151 99h1.2v1.2h-1.2zM155 99h1.2v1.2h-1.2zM164 99h1.2v1.2h-1.2zM173 99h1.2v1.2h-1.2zM189 98h1.2v1.2h-1.2zM210 98h1.2v1.2h-1.2zM2 103h1.2v1.2h-1.2zM6 103h1.2v1.2h-1.2zM11 103h1.2v1.2h-1.2zM14 102h1.2v1.2h-1.2zM19 103h1.2v1.2h-1.2zM22 102h1.2v1.2h-1.2zM27 102h1.2v1.2h-1.2zM32 103h1.2v1.2h-1.2zM36 103h1.2v1.2h-1.2zM39 103h1.2v1.2h-1.2zM44 103h1.2v1.2h-1.2zM48 102h1.2v1.2h-1.2zM52 102h1.2v1.2h-1.2zM56 102h1.2v1.2h-1.2zM60 103h1.2v1.2h-1.2zM64 102h1.2v1.2h-1.2zM68 103h1.2v1.2h-1.2zM73 102h1.2v1.2h-1.2zM76 103h1.2v1.2h-1.2zM81 103h1.2v1.2h-1.2zM85 103h1.2v1.2h-1.2zM90 103h1.2v1.2h-1.2zM93 103h1.2v1.2h-1.2zM98 102h1.2v1.2h-1.2zM102 102h1.2v1.2h-1.2zM106 103h1.2v1.2h-1.2zM111 103h1.2v1.2h-1.2zM113 102h1.2v1.2h-1.2zM117 103h1.2v1.2h-1.2zM123 102h1.2v1.2h-1.2zM131 103h1.2v1.2h-1.2zM135 102h1.2v1.2h-1.2zM140 102h1.2v1.2h-1.2zM147 102h1.2v1.2h-1.2zM160 102h1.2v1.2h-1.2zM171 103h1.2v1.2h-1.2zM177 102h1.2v1.2h-1.2zM181 102h1.2v1.2h-1.2zM189 102h1.2v1.2h-1.2zM198 103h1.2v1.2h-1.2zM205 103h1.2v1.2h-1.2z"/></svg>
<svg style="position:absolute;left:0;top:0" width="140" height="100" viewBox="0 0 140 100">
<polygon points="102.5,26 127,40.1 127,67.7 102.5,81.8 78.2,67.7 78.2,39.9" fill="#fff"/>
<polygon points="102.5,54.5 127,40.6 127,67.7 102.5,81.8" fill="#cfe0d7"/>
<polygon points="92.1,51.2 97.9,48.0 106.0,52.5 106.0,42.1 113.1,38.3 113.1,56.9 106.9,60.1 99.6,56.0 99.6,65.5 92.1,69.7" fill="#177550"/>
</svg>
<svg style="position:absolute;left:0;top:0" width="280" height="100" viewBox="0 0 280 100"><g fill="#fff" fill-rule="evenodd"><path d="M145 38.9H152.8L163.6 57.5V38.9H169.1V69H161.2L150.5 50.2V69H145Z"/><path d="M180 46.5H184.4Q191.6 46.5 191.6 53.7V62.1Q191.6 69.3 184.4 69.3H180Q172.8 69.3 172.8 62.1V53.7Q172.8 46.5 180 46.5ZM181.2 51.2Q178 51.2 178 54.4V61.7Q178 64.9 181.2 64.9H182.9Q186.1 64.9 186.1 61.7V54.4Q186.1 51.2 182.9 51.2Z"/><path d="M195 47.3H200V48.6Q203.5 46.5 206.5 46.5Q210.5 46.5 212.5 48.8Q216 46.5 219.5 46.5Q226 46.5 226 53.5V69H220.2V54.5Q220.2 51.8 217.8 51.8Q215 51.8 212.9 53.3V69H207.9V54.5Q207.9 51.8 205.5 51.8Q202.6 51.8 200 53.3V69H195Z"/><path d="M230.1 47.6Q233.5 46.5 237.5 46.5Q245.9 46.5 245.9 54.5V69H241L240.7 67.6Q238.6 69.3 235.4 69.3Q229.1 69.3 229.1 62.9Q229.1 56.3 236.2 56.3H240.6V54.8Q240.6 51.3 236.8 51.3Q233.6 51.3 230.1 52.6ZM240.6 60.6H236.4Q233.8 60.6 233.8 62.8Q233.8 64.9 236.2 64.9Q238.6 64.9 240.6 63.6Z"/><path d="M262.1 37.9H267.6V69H262.6L262.3 67.7Q260 69.3 256.4 69.3Q249.5 69.3 249.5 62V53.8Q249.5 46.5 256.6 46.5Q259.6 46.5 262.1 47.6ZM262.1 52Q260.3 51.2 258.3 51.2Q254.8 51.2 254.8 54.6V61.4Q254.8 64.9 258.3 64.9Q260.4 64.9 262.1 64Z"/></g></svg>
<div class="t" style="left:3323.53px;top:37px;font-size:32px;font-family:'Liberation Sans', sans-serif;font-weight:400;color:#ebebeb;transform:scaleX(1.0044);">Documentation</div>
<div style="left:3570px;top:38px;width:2px;height:32px;background:rgba(255,255,255,.45);"></div>
<div class="t" style="left:3601.83px;top:37px;font-size:32px;font-family:'Liberation Sans', sans-serif;font-weight:400;color:#ebebeb;transform:scaleX(0.9532);">ACL Tokens</div>
<div style="left:0px;top:108px;width:3840px;height:138px;background:#1d9467;"></div>
<div class="t" style="left:550.97px;top:158px;font-size:40px;font-family:'Liberation Sans', sans-serif;font-weight:400;color:rgba(255,255,255,.72);transform:scaleX(1.0061);-webkit-text-stroke:1.1px rgba(255,255,255,.72);">Jobs</div>
<svg style="position:absolute;left:660px;top:160px" width="30" height="42" viewBox="0 0 30 42"><polygon points="17,4 21.5,4 11.5,37.6 7,37.6" fill="#25ba81"/></svg>
<div class="t" style="left:711.09px;top:158px;font-size:40px;font-family:'Liberation Sans', sans-serif;font-weight:400;color:#fff;letter-spacing:0.804px;-webkit-text-stroke:1.1px #fff;">periodic-test</div>
<div style="left:548px;top:246px;width:2px;height:1914px;background:#b5bfcd;"></div>
<div class="t" style="left:24.13px;top:286px;font-size:23.7px;font-family:'Liberation Sans', sans-serif;font-weight:400;color:#7b8eab;transform:scaleX(0.9469);">WORKLOAD</div>
<div class="t" style="left:47.24px;top:345px;font-size:32px;font-family:'Liberation Sans', sans-serif;font-weight:400;color:#1563ff;letter-spacing:1.244px;-webkit-text-stroke:0.7px #1563ff;">Jobs</div>
<div style="left:541px;top:326px;width:7px;height:70px;background:#1563ff;"></div>
<div style="left:24px;top:426px;width:500px;height:2px;background:#b5bfcd;"></div>
<div class="t" style="left:23.08px;top:451px;font-size:23.7px;font-family:'Liberation Sans', sans-serif;font-weight:400;color:#7b8eab;transform:scaleX(0.9524);">CLUSTER</div>
<div class="t" style="left:46.23px;top:511px;font-size:32px;font-family:'Liberation Sans', sans-serif;font-weight:400;color:#0a0a0a;letter-spacing:1.237px;-webkit-text-stroke:0.7px #0a0a0a;">Clients</div>
<div class="t" style="left:46.26px;top:581px;font-size:32px;font-family:'Liberation Sans', sans-serif;font-weight:400;color:#0a0a0a;letter-spacing:0.838px;-webkit-text-stroke:0.7px #0a0a0a;">Servers</div>
<div style="left:550px;top:246px;width:3290px;height:106px;background:#f4f4f4;"></div>
<div style="left:550px;top:352px;width:3290px;height:2px;background:#dbdbdb;"></div>
<div style="left:580px;top:347px;width:234px;height:7px;background:#1563ff;"></div>
<div class="t" style="left:627.57px;top:286px;font-size:32px;font-family:'Liberation Sans', sans-serif;font-weight:400;color:#1563ff;letter-spacing:0.768px;-webkit-text-stroke:0.8px #1563ff;">Overview</div>
<div class="t" style="left:860.04px;top:286px;font-size:32px;font-family:'Liberation Sans', sans-serif;font-weight:400;color:#7b8eab;letter-spacing:1.548px;-webkit-text-stroke:0.8px #7b8eab;">Definition</div>
<div class="t" style="left:1100.97px;top:286px;font-size:32px;font-family:'Liberation Sans', sans-serif;font-weight:400;color:#7b8eab;letter-spacing:0.839px;-webkit-text-stroke:0.8px #7b8eab;">Versions</div>
<div class="t" style="left:596.05px;top:452px;font-size:52px;font-family:'Liberation Sans', sans-serif;font-weight:400;color:#363636;letter-spacing:1.887px;-webkit-text-stroke:1.5px #363636;">periodic-test</div>
<div style="left:961.6px;top:463.5px;width:157.89999999999998px;height:39.89999999999998px;background:#25ba81;border-radius:20px;"></div>
<div class="t" style="left:980.60px;top:470px;font-size:26.3px;font-family:'Liberation Sans', sans-serif;font-weight:400;color:#fff;transform:scaleX(0.9804);">RUNNING</div>
<div class="t" style="left:1150.93px;top:470px;font-size:26.3px;font-family:'Liberation Sans', sans-serif;font-weight:400;color:#7b8eab;transform:scaleX(0.9795);-webkit-text-stroke:1.1px #7b8eab;">PERIODIC</div>
<div style="left:1305px;top:451px;width:224px;height:66px;background:#f88a22;border:3px solid #dcdcd8;border-radius:7px;box-sizing:border-box;box-shadow:0 1px 2px rgba(0,0,0,.08);"></div>
<div class="t" style="left:1329.00px;top:470px;font-size:26.3px;font-family:'Liberation Sans', sans-serif;font-weight:700;color:#fff;transform:scaleX(1.0173);">Force Launch</div>
<div style="left:596px;top:558px;width:2548px;height:98px;border:2px solid #b5bfcd;border-radius:4px;box-sizing:border-box;"></div>
<div class="t" style="left:645.81px;top:589px;font-size:32px;font-family:'Liberation Sans', sans-serif;font-weight:700;color:#363636;transform:scaleX(0.9730);">Version:</div>
<div class="t" style="left:777.09px;top:589px;font-size:32px;font-family:'Liberation Sans', sans-serif;font-weight:400;color:#0a0a0a;transform:scaleX(0.9345);">0</div>
<div style="left:806.4px;top:593.2px;width:3.1000000000000227px;height:27.399999999999977px;background:#0a0a0a;"></div>
<div class="t" style="left:820.57px;top:589px;font-size:32px;font-family:'Liberation Sans', sans-serif;font-weight:700;color:#363636;transform:scaleX(0.9976);">Priority:</div>
<div class="t" style="left:950.19px;top:589px;font-size:32px;font-family:'Liberation Sans', sans-serif;font-weight:400;color:#0a0a0a;letter-spacing:1.645px;">50</div>
<div style="left:999.3px;top:593.2px;width:2.900000000000091px;height:27.399999999999977px;background:#0a0a0a;"></div>
<div class="t" style="left:1014.15px;top:589px;font-size:32px;font-family:'Liberation Sans', sans-serif;font-weight:700;color:#363636;transform:scaleX(0.9652);">Cron:</div>
<svg style="position:absolute;left:1103.5px;top:596px" width="18.5" height="16" viewBox="0 0 18.5 16"><g stroke="#0a0a0a" stroke-width="2.6" stroke-linecap="butt"><line x1="9.25" y1="1" x2="9.25" y2="8"/><line x1="3.5" y1="4.2" x2="9.25" y2="8"/><line x1="15" y1="4.2" x2="9.25" y2="8"/><line x1="5" y1="13.6" x2="9.25" y2="8"/><line x1="13.5" y1="13.6" x2="9.25" y2="8"/></g></svg>
<svg style="position:absolute;left:1122.0px;top:592px" width="18.5" height="28" viewBox="0 0 18.5 28"><line x1="15" y1="2" x2="4" y2="26" stroke="#0a0a0a" stroke-width="2.6"/></svg>
<div class="t" style="left:1141.26px;top:593px;font-size:30.8px;font-family:'Liberation Mono', monospace;font-weight:400;color:#0a0a0a;transform:scaleX(0.9022);">5</div>
<svg style="position:absolute;left:1177.5px;top:596px" width="18.5" height="16" viewBox="0 0 18.5 16"><g stroke="#0a0a0a" stroke-width="2.6" stroke-linecap="butt"><line x1="9.25" y1="1" x2="9.25" y2="8"/><line x1="3.5" y1="4.2" x2="9.25" y2="8"/><line x1="15" y1="4.2" x2="9.25" y2="8"/><line x1="5" y1="13.6" x2="9.25" y2="8"/><line x1="13.5" y1="13.6" x2="9.25" y2="8"/></g></svg>
<svg style="position:absolute;left:1214.5px;top:596px" width="18.5" height="16" viewBox="0 0 18.5 16"><g stroke="#0a0a0a" stroke-width="2.6" stroke-linecap="butt"><line x1="9.25" y1="1" x2="9.25" y2="8"/><line x1="3.5" y1="4.2" x2="9.25" y2="8"/><line x1="15" y1="4.2" x2="9.25" y2="8"/><line x1="5" y1="13.6" x2="9.25" y2="8"/><line x1="13.5" y1="13.6" x2="9.25" y2="8"/></g></svg>
<svg style="position:absolute;left:1251.5px;top:596px" width="18.5" height="16" viewBox="0 0 18.5 16"><g stroke="#0a0a0a" stroke-width="2.6" stroke-linecap="butt"><line x1="9.25" y1="1" x2="9.25" y2="8"/><line x1="3.5" y1="4.2" x2="9.25" y2="8"/><line x1="15" y1="4.2" x2="9.25" y2="8"/><line x1="5" y1="13.6" x2="9.25" y2="8"/><line x1="13.5" y1="13.6" x2="9.25" y2="8"/></g></svg>
<svg style="position:absolute;left:1288.5px;top:596px" width="18.5" height="16" viewBox="0 0 18.5 16"><g stroke="#0a0a0a" stroke-width="2.6" stroke-linecap="butt"><line x1="9.25" y1="1" x2="9.25" y2="8"/><line x1="3.5" y1="4.2" x2="9.25" y2="8"/><line x1="15" y1="4.2" x2="9.25" y2="8"/><line x1="5" y1="13.6" x2="9.25" y2="8"/><line x1="13.5" y1="13.6" x2="9.25" y2="8"/></g></svg>
<svg style="position:absolute;left:1325.5px;top:596px" width="18.5" height="16" viewBox="0 0 18.5 16"><g stroke="#0a0a0a" stroke-width="2.6" stroke-linecap="butt"><line x1="9.25" y1="1" x2="9.25" y2="8"/><line x1="3.5" y1="4.2" x2="9.25" y2="8"/><line x1="15" y1="4.2" x2="9.25" y2="8"/><line x1="5" y1="13.6" x2="9.25" y2="8"/><line x1="13.5" y1="13.6" x2="9.25" y2="8"/></g></svg>
<div style="left:596px;top:702px;width:2548px;height:442px;border:2px solid #b5bfcd;border-radius:4px;box-sizing:border-box;"></div>
<div style="left:598px;top:704px;width:2544px;height:92px;background:#f4f4f4;border-radius:2px 2px 0 0;"></div>
<div style="left:598px;top:796px;width:2544px;height:2px;background:#b5bfcd;"></div>
<div class="t" style="left:644.37px;top:735px;font-size:32px;font-family:'Liberation Sans', sans-serif;font-weight:400;color:#0a0a0a;transform:scaleX(0.9845);">Children Status</div>
<div style="left:867.8px;top:727.8px;width:52.200000000000045px;height:46.200000000000045px;background:#fff;border-radius:5px;"></div>
<div class="t" style="left:885.90px;top:740px;font-size:26.3px;font-family:'Liberation Sans', sans-serif;font-weight:400;color:#0a0a0a;transform:scaleX(1.1137);">6</div>
<div style="left:646px;top:936px;width:1221.5px;height:66px;background:#25ba81;"></div>
<div style="left:2102px;top:920.5px;width:30px;height:29.0px;background:#dcdcdc;border:2px solid #a8a8a8;border-radius:5px;box-sizing:border-box;"></div>
<div class="t" style="left:2148.85px;top:915px;font-size:32px;font-family:'Liberation Sans', sans-serif;font-weight:400;color:#7b8eab;transform:scaleX(0.9789);">0 Pending</div>
<div style="left:2490px;top:898px;width:396px;height:65.39999999999998px;border:2px solid #b5bfcd;border-radius:5px;box-sizing:border-box;"></div>
<div style="left:2516px;top:920px;width:30px;height:30px;background:#25ba81;border-radius:5px;"></div>
<div class="t" style="left:2561.97px;top:915px;font-size:32px;font-family:'Liberation Sans', sans-serif;font-weight:400;color:#0a0a0a;transform:scaleX(0.9804);">6 Running</div>
<div style="left:2308px;top:998px;width:30px;height:32px;background:#1d9467;border-radius:5px;"></div>
<div class="t" style="left:2354.26px;top:995px;font-size:32px;font-family:'Liberation Sans', sans-serif;font-weight:400;color:#7b8eab;transform:scaleX(0.9746);">0 Dead</div>
<div style="left:596px;top:1190px;width:2548px;height:96px;border:2px solid #b5bfcd;border-bottom:0;border-radius:4px 4px 0 0;box-sizing:border-box;background:#f4f4f4;"></div>
<div style="left:596px;top:1284px;width:2548px;height:2px;background:#b5bfcd;"></div>
<div class="t" style="left:644.72px;top:1222px;font-size:32px;font-family:'Liberation Sans', sans-serif;font-weight:400;color:#0a0a0a;transform:scaleX(0.9832);">Job Launches</div>
<div style="left:596px;top:1286px;width:2px;height:838px;background:#b5bfcd;"></div>
<div style="left:3140px;top:1286px;width:2px;height:838px;background:#b5bfcd;"></div>
<div style="left:598px;top:1286px;width:2542px;height:92.5px;background:#f4f4f4;"></div>
<div style="left:598px;top:1378.5px;width:2542px;height:2.0px;background:#b5bfcd;"></div>
<div class="t" style="left:644.13px;top:1315px;font-size:32px;font-family:'Liberation Sans', sans-serif;font-weight:400;color:#7a7a7a;transform:scaleX(0.9651);">Name</div>
<svg style="position:absolute;left:1360px;top:1316px" width="24" height="30" viewBox="0 0 24 30"><polygon points="8.1,3 15.9,3 15.9,17.5 21.6,17.5 12.3,27.9 2.2,17.5 8.1,17.5" fill="#b0b4b8"/></svg>
<div class="t" style="left:1471.64px;top:1316px;font-size:32px;font-family:'Liberation Sans', sans-serif;font-weight:400;color:#7a7a7a;transform:scaleX(0.9972);">Status</div>
<div class="t" style="left:1806.89px;top:1316px;font-size:32px;font-family:'Liberation Sans', sans-serif;font-weight:400;color:#7a7a7a;transform:scaleX(0.9854);">Type</div>
<div class="t" style="left:2032.08px;top:1316px;font-size:32px;font-family:'Liberation Sans', sans-serif;font-weight:400;color:#7a7a7a;transform:scaleX(1.0228);">Priority</div>
<div class="t" style="left:2289.67px;top:1317px;font-size:32px;font-family:'Liberation Sans', sans-serif;font-weight:400;color:#b1b6bd;transform:scaleX(0.9813);">Groups</div>
<div class="t" style="left:2551.60px;top:1317px;font-size:32px;font-family:'Liberation Sans', sans-serif;font-weight:400;color:#b1b6bd;transform:scaleX(0.9638);">Summary</div>
<div class="t" style="left:643.60px;top:1426px;font-size:32px;font-family:'Liberation Sans', sans-serif;font-weight:400;color:#0a0a0a;letter-spacing:1.500px;-webkit-text-stroke:1.0px #0a0a0a;">periodic-test/periodic-1522717200</div>
<div style="left:1472px;top:1424.0px;width:160px;height:38.0px;background:#25ba81;border-radius:19px;"></div>
<div class="t" style="left:1491.89px;top:1430px;font-size:26.3px;font-family:'Liberation Sans', sans-serif;font-weight:400;color:#fff;transform:scaleX(0.9838);">RUNNING</div>
<div class="t" style="left:1805.27px;top:1426px;font-size:32px;font-family:'Liberation Sans', sans-serif;font-weight:400;color:#0a0a0a;letter-spacing:0.824px;">batch</div>
<div class="t" style="left:2034.39px;top:1426px;font-size:32px;font-family:'Liberation Sans', sans-serif;font-weight:400;color:#0a0a0a;letter-spacing:1.545px;">50</div>
<div class="t" style="left:2289.49px;top:1426px;font-size:32px;font-family:'Liberation Sans', sans-serif;font-weight:400;color:#0a0a0a;transform:scaleX(0.8577);">1</div>
<div style="left:2553.8px;top:1434.4px;width:537.8999999999996px;height:12.799999999999955px;background:#25ba81;"></div>
<div style="left:598px;top:1501.7px;width:2542px;height:2.0px;background:#b5bfcd;"></div>
<div class="t" style="left:643.60px;top:1550px;font-size:32px;font-family:'Liberation Sans', sans-serif;font-weight:400;color:#0a0a0a;letter-spacing:1.502px;-webkit-text-stroke:1.0px #0a0a0a;">periodic-test/periodic-1522717255</div>
<div style="left:1472px;top:1547.9px;width:160px;height:38.0px;background:#25ba81;border-radius:19px;"></div>
<div class="t" style="left:1491.89px;top:1554px;font-size:26.3px;font-family:'Liberation Sans', sans-serif;font-weight:400;color:#fff;transform:scaleX(0.9838);">RUNNING</div>
<div class="t" style="left:1805.27px;top:1550px;font-size:32px;font-family:'Liberation Sans', sans-serif;font-weight:400;color:#0a0a0a;letter-spacing:0.824px;">batch</div>
<div class="t" style="left:2034.39px;top:1550px;font-size:32px;font-family:'Liberation Sans', sans-serif;font-weight:400;color:#0a0a0a;letter-spacing:1.545px;">50</div>
<div class="t" style="left:2289.49px;top:1550px;font-size:32px;font-family:'Liberation Sans', sans-serif;font-weight:400;color:#0a0a0a;transform:scaleX(0.8577);">1</div>
<div style="left:2553.8px;top:1558.3000000000002px;width:537.8999999999996px;height:12.799999999999955px;background:#25ba81;"></div>
<div style="left:598px;top:1625.6000000000001px;width:2542px;height:2.0px;background:#b5bfcd;"></div>
<div class="t" style="left:643.60px;top:1673px;font-size:32px;font-family:'Liberation Sans', sans-serif;font-weight:400;color:#0a0a0a;letter-spacing:1.503px;-webkit-text-stroke:1.0px #0a0a0a;">periodic-test/periodic-1522717256</div>
<div style="left:1472px;top:1671.8px;width:160px;height:38.0px;background:#25ba81;border-radius:19px;"></div>
<div class="t" style="left:1491.89px;top:1678px;font-size:26.3px;font-family:'Liberation Sans', sans-serif;font-weight:400;color:#fff;transform:scaleX(0.9838);">RUNNING</div>
<div class="t" style="left:1805.27px;top:1673px;font-size:32px;font-family:'Liberation Sans', sans-serif;font-weight:400;color:#0a0a0a;letter-spacing:0.824px;">batch</div>
<div class="t" style="left:2034.39px;top:1673px;font-size:32px;font-family:'Liberation Sans', sans-serif;font-weight:400;color:#0a0a0a;letter-spacing:1.545px;">50</div>
<div class="t" style="left:2289.49px;top:1673px;font-size:32px;font-family:'Liberation Sans', sans-serif;font-weight:400;color:#0a0a0a;transform:scaleX(0.8577);">1</div>
<div style="left:2553.8px;top:1682.2px;width:537.8999999999996px;height:12.799999999999955px;background:#25ba81;"></div>
<div style="left:598px;top:1749.5px;width:2542px;height:2.0px;background:#b5bfcd;"></div>
<div class="t" style="left:643.60px;top:1797px;font-size:32px;font-family:'Liberation Sans', sans-serif;font-weight:400;color:#0a0a0a;letter-spacing:1.503px;-webkit-text-stroke:1.0px #0a0a0a;">periodic-test/periodic-1522717258</div>
<div style="left:1472px;top:1795.7px;width:160px;height:38.0px;background:#25ba81;border-radius:19px;"></div>
<div class="t" style="left:1491.89px;top:1802px;font-size:26.3px;font-family:'Liberation Sans', sans-serif;font-weight:400;color:#fff;transform:scaleX(0.9838);">RUNNING</div>
<div class="t" style="left:1805.27px;top:1797px;font-size:32px;font-family:'Liberation Sans', sans-serif;font-weight:400;color:#0a0a0a;letter-spacing:0.824px;">batch</div>
<div class="t" style="left:2034.39px;top:1797px;font-size:32px;font-family:'Liberation Sans', sans-serif;font-weight:400;color:#0a0a0a;letter-spacing:1.545px;">50</div>
<div class="t" style="left:2289.49px;top:1797px;font-size:32px;font-family:'Liberation Sans', sans-serif;font-weight:400;color:#0a0a0a;transform:scaleX(0.8577);">1</div>
<div style="left:2553.8px;top:1806.1000000000001px;width:537.8999999999996px;height:12.799999999999955px;background:#25ba81;"></div>
<div style="left:598px;top:1873.4px;width:2542px;height:2.0px;background:#b5bfcd;"></div>
<div class="t" style="left:643.60px;top:1921px;font-size:32px;font-family:'Liberation Sans', sans-serif;font-weight:400;color:#0a0a0a;letter-spacing:1.504px;-webkit-text-stroke:1.0px #0a0a0a;">periodic-test/periodic-1522717259</div>
<div style="left:1472px;top:1919.6px;width:160px;height:38.0px;background:#25ba81;border-radius:19px;"></div>
<div class="t" style="left:1491.89px;top:1926px;font-size:26.3px;font-family:'Liberation Sans', sans-serif;font-weight:400;color:#fff;transform:scaleX(0.9838);">RUNNING</div>
<div class="t" style="left:1805.27px;top:1921px;font-size:32px;font-family:'Liberation Sans', sans-serif;font-weight:400;color:#0a0a0a;letter-spacing:0.824px;">batch</div>
<div class="t" style="left:2034.39px;top:1921px;font-size:32px;font-family:'Liberation Sans', sans-serif;font-weight:400;color:#0a0a0a;letter-spacing:1.545px;">50</div>
<div class="t" style="left:2289.49px;top:1921px;font-size:32px;font-family:'Liberation Sans', sans-serif;font-weight:400;color:#0a0a0a;transform:scaleX(0.8577);">1</div>
<div style="left:2553.8px;top:1930.0px;width:537.8999999999996px;height:12.800000000000182px;background:#25ba81;"></div>
<div style="left:598px;top:1997.3000000000002px;width:2542px;height:2.0px;background:#b5bfcd;"></div>
<div class="t" style="left:643.60px;top:2045px;font-size:32px;font-family:'Liberation Sans', sans-serif;font-weight:400;color:#0a0a0a;letter-spacing:1.503px;-webkit-text-stroke:1.0px #0a0a0a;">periodic-test/periodic-1522717276</div>
<div style="left:1472px;top:2043.5px;width:160px;height:38.0px;background:#25ba81;border-radius:19px;"></div>
<div class="t" style="left:1491.89px;top:2050px;font-size:26.3px;font-family:'Liberation Sans', sans-serif;font-weight:400;color:#fff;transform:scaleX(0.9838);">RUNNING</div>
<div class="t" style="left:1805.27px;top:2045px;font-size:32px;font-family:'Liberation Sans', sans-serif;font-weight:400;color:#0a0a0a;letter-spacing:0.824px;">batch</div>
<div class="t" style="left:2034.39px;top:2045px;font-size:32px;font-family:'Liberation Sans', sans-serif;font-weight:400;color:#0a0a0a;letter-spacing:1.545px;">50</div>
<div class="t" style="left:2289.49px;top:2045px;font-size:32px;font-family:'Liberation Sans', sans-serif;font-weight:400;color:#0a0a0a;transform:scaleX(0.8577);">1</div>
<div style="left:2553.8px;top:2053.9px;width:537.8999999999996px;height:12.799999999999727px;background:#25ba81;"></div>
<div style="left:596px;top:2124px;width:2548px;height:76px;background:#f4f4f4;border-left:2px solid #b5bfcd;border-right:2px solid #b5bfcd;box-sizing:border-box;"></div>
<div style="left:598px;top:2122px;width:2546px;height:2px;background:#b5bfcd;"></div>
<div class="t" style="left:3017.97px;top:2153px;font-size:32px;font-family:'Liberation Sans', sans-serif;font-weight:400;color:#6f6f6f;transform:scaleX(0.9166);">1–6 of 6</div>
<div style="left:3820px;top:2px;width:18px;height:2015.5px;background:rgba(0,0,0,.5);background-clip:padding-box;border:2px solid rgba(255,255,255,.22);border-radius:9px;box-sizing:border-box;"></div>
</body></html>
